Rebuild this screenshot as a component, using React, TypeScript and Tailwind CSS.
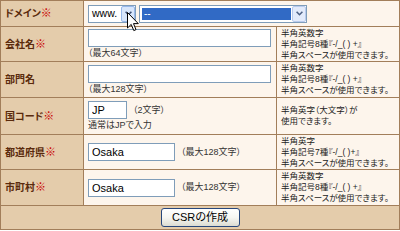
import React from 'react';

const label =
  'flex items-center pl-[4px] bg-[#e4ccab] text-[10px] font-bold text-[#5a2a0c]';
const field = 'flex flex-col justify-center pl-[4px] bg-[#fdf5ec] text-[9px] leading-[11px] text-[#333]';
const hint = 'flex flex-col justify-center pl-[4px] bg-[#fdf5ec] text-[8.5px] leading-[11px] text-[#222]';
const box =
  'h-[18px] border border-[#7f9db9] bg-white px-[3px] text-[11px] text-black outline-none';

const Req = () => <span className="text-[11px] text-[#c80000]">※</span>;

const Chevron = ({ color = '#4d6185' }: { color?: string }) => (
  <svg width="7" height="5" viewBox="0 0 7 5">
    <path d="M0.6 0.8 L3.5 3.7 L6.4 0.8" fill="none" stroke={color} strokeWidth="1.6" />
  </svg>
);

const Cursor = () => (
  <svg
    className="absolute left-[127px] top-[12px]"
    width="12"
    height="20"
    viewBox="0 0 12 20"
  >
    <path
      d="M0.5 0.5 L0.5 16 L4.2 12.4 L6.8 18.6 L9 17.6 L6.5 11.6 L11.3 11.6 Z"
      fill="white"
      stroke="black"
      strokeWidth="1"
      strokeLinejoin="round"
    />
  </svg>
);

export default function App() {
  return (
    <div className="relative w-[400px] font-['Liberation_Sans','Noto_Sans_CJK_JP',sans-serif] [font-feature-settings:'palt']">
      <div className="grid grid-cols-[82px_192px_122px] grid-rows-[25px_34px_35px_36px_34px_35px_23px] gap-px bg-[#a27e5a] p-px">
        {/* ドメイン */}
        <div className={label}>
          ドメイン<Req />
        </div>
        <div className="col-span-2 flex items-center gap-[3px] pl-[4px] bg-[#fdf5ec]">
          <div className="flex h-[18px] w-[48px] items-center border border-[#7f9db9] bg-white pl-[3px] text-[10.5px] text-black">
            <span className="flex-1">www.</span>
            <span className="flex h-[16px] w-[14px] items-center justify-center rounded-[2px] border border-[#98b8ea] bg-[#d8e6fb]">
              <Chevron color="#3c4e74" />
            </span>
          </div>
          <div className="flex h-[18px] w-[168px] items-center border border-[#7f9db9] bg-white p-[2px] pr-0">
            <span className="flex h-[12px] flex-1 items-center bg-[#316ac5] pl-[2px] text-[10px] text-white">
              --
            </span>
            <span className="ml-[1px] flex h-[16px] w-[14px] items-center justify-center rounded-[2px] border border-[#b9cbee] bg-[#e3ebfb]">
              <Chevron />
            </span>
          </div>
        </div>

        {/* 会社名 */}
        <div className={label}>
          会社名<Req />
        </div>
        <div className={field}>
          <input className={`${box} w-[183px]`} defaultValue="" readOnly />
          <span className="mt-[1px]">（最大64文字）</span>
        </div>
        <div className={hint}>
          <span>半角英数字</span>
          <span>半角記号8種『-/_( ) +』</span>
          <span>半角スペースが使用できます。</span>
        </div>

        {/* 部門名 */}
        <div className={label}>部門名</div>
        <div className={field}>
          <input className={`${box} w-[183px]`} defaultValue="" readOnly />
          <span className="mt-[1px]">（最大128文字）</span>
        </div>
        <div className={hint}>
          <span>半角英数字</span>
          <span>半角記号8種『-/_( ) +』</span>
          <span>半角スペースが使用できます。</span>
        </div>

        {/* 国コード */}
        <div className={label}>
          国コード<Req />
        </div>
        <div className={field}>
          <div className="flex items-center gap-[6px]">
            <input className={`${box} w-[39px]`} defaultValue="JP" readOnly />
            <span>（2文字）</span>
          </div>
          <span className="mt-[1px]">通常はJPで入力</span>
        </div>
        <div className={hint}>
          <span>半角英字（大文字）が</span>
          <span>使用できます。</span>
        </div>

        {/* 都道府県 */}
        <div className={label}>
          都道府県<Req />
        </div>
        <div className={`${field} !flex-row items-center justify-start gap-[6px]`}>
          <input className={`${box} w-[87px]`} defaultValue="Osaka" readOnly />
          <span>（最大128文字）</span>
        </div>
        <div className={hint}>
          <span>半角英字</span>
          <span>半角記号7種『-/_( )+』</span>
          <span>半角スペースが使用できます。</span>
        </div>

        {/* 市町村 */}
        <div className={label}>
          市町村<Req />
        </div>
        <div className={`${field} !flex-row items-center justify-start gap-[6px]`}>
          <input className={`${box} w-[87px]`} defaultValue="Osaka" readOnly />
          <span>（最大128文字）</span>
        </div>
        <div className={hint}>
          <span>半角英数字</span>
          <span>半角記号8種『-/_( ) +』</span>
          <span>半角スペースが使用できます。</span>
        </div>

        {/* submit */}
        <div className="col-span-3 flex items-center justify-center bg-[#e4ccab]">
          <button
            type="button"
            className="h-[19px] w-[79px] rounded-[3px] border border-[#27477c] bg-gradient-to-b from-white via-[#f6f6f2] to-[#dcdcd2] text-[11px] text-black"
          >
            CSRの作成
          </button>
        </div>
      </div>
      <Cursor />
    </div>
  );
}
